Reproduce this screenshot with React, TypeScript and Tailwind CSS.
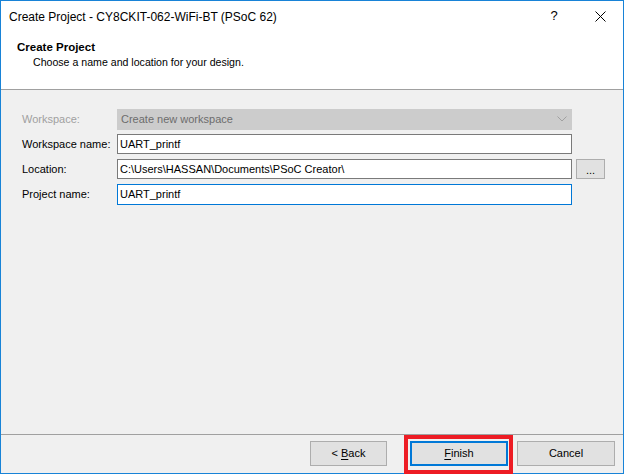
import type { ReactNode } from "react";

const FONT = { fontFamily: "'Segoe UI', 'Liberation Sans', Arial, sans-serif" };

function Field({ label, children, disabled = false }: { label: string; children: ReactNode; disabled?: boolean }) {
  return (
    <div className="flex h-[20px] items-center">
      <span
        className={`w-[116px] shrink-0 whitespace-nowrap pl-[21px] ${disabled ? "text-[#a0a0a0]" : "text-black"}`}
      >
        {label}
      </span>
      {children}
    </div>
  );
}

function DialogButton({ children, className = "" }: { children: ReactNode; className?: string }) {
  return (
    <button
      type="button"
      className={`flex h-[25px] items-center justify-center border border-[#adadad] bg-[#e1e1e1] text-[11px] text-black ${className}`}
    >
      {children}
    </button>
  );
}

export default function App() {
  return (
    <div
      className="flex h-[474px] w-[624px] flex-col border border-[#1883d7] bg-[#f0f0f0] text-[11px] text-black"
      style={FONT}
    >
      {/* title bar */}
      <div className="flex h-[30px] shrink-0 items-center bg-white pl-[8px]">
        <span className="flex-1 pt-[1px] text-[12px]">Create Project - CY8CKIT-062-WiFi-BT (PSoC 62)</span>
        <span className="w-[46px] text-center text-[13px]">?</span>
        <span className="flex w-[46px] items-center justify-center">
          <svg width="11" height="11" viewBox="0 0 11 11" stroke="black" strokeWidth="1">
            <path d="M0.5 0.5 L10.5 10.5 M10.5 0.5 L0.5 10.5" />
          </svg>
        </span>
      </div>

      {/* header */}
      <div className="flex h-[59px] shrink-0 flex-col border-b border-[#a0a0a0] bg-white pl-[16px] pt-[8px]">
        <span className="text-[11.5px] font-bold leading-[16px]">Create Project</span>
        <span className="pl-[16px] text-[10.6px] leading-[14px]">Choose a name and location for your design.</span>
      </div>

      {/* form */}
      <div className="flex flex-1 flex-col gap-[5px] pt-[19px]">
        <Field label="Workspace:" disabled>
          <div className="flex h-[21px] w-[455px] items-center justify-between border border-[#cccccc] bg-[#cccccc] pl-[3px] pr-[4px] text-[#6d6d6d]">
            <span>Create new workspace</span>
            <svg width="10" height="6" viewBox="0 0 10 6" fill="none" stroke="#a0a0a0" strokeWidth="1">
              <path d="M0.5 0.5 L5 5 L9.5 0.5" />
            </svg>
          </div>
        </Field>
        <Field label="Workspace name:">
          <div className="flex h-[20px] w-[455px] items-center border border-[#7a7a7a] bg-white pl-[2px]">UART_printf</div>
        </Field>
        <Field label="Location:">
          <div className="flex h-[20px] w-[455px] items-center border border-[#7a7a7a] bg-white pl-[2px]">
            C:\Users\HASSAN\Documents\PSoC Creator\
          </div>
          <button
            type="button"
            className="ml-[4px] flex h-[20px] w-[29px] items-end justify-center border border-[#adadad] bg-[#e1e1e1] pb-[3px] text-[11px] leading-[10px]"
          >
            ...
          </button>
        </Field>
        <Field label="Project name:">
          <div className="flex h-[21px] w-[455px] items-center border border-[#0078d7] bg-white pl-[2px]">UART_printf</div>
        </Field>
      </div>

      {/* footer */}
      <div className="flex h-[39px] shrink-0 items-start gap-[23px] border-t border-[#a0a0a0] pl-[309px] pt-[6px]">
        <DialogButton className="w-[77px]">
          &lt; <span className="ml-[3px] underline underline-offset-2">B</span>ack
        </DialogButton>
        <div className="relative">
          <div className="flex h-[25px] w-[98px] items-center justify-center border-2 border-[#0078d7] bg-[#e1e1e1]">
            <span className="underline underline-offset-2">F</span>inish
          </div>
          <div className="absolute left-[-6px] top-[-6px] h-[39px] w-[109px] border-[4px] border-[#ed1c24]" />
        </div>
        <DialogButton className="-ml-[14px] w-[98px]">Cancel</DialogButton>
      </div>
    </div>
  );
}
